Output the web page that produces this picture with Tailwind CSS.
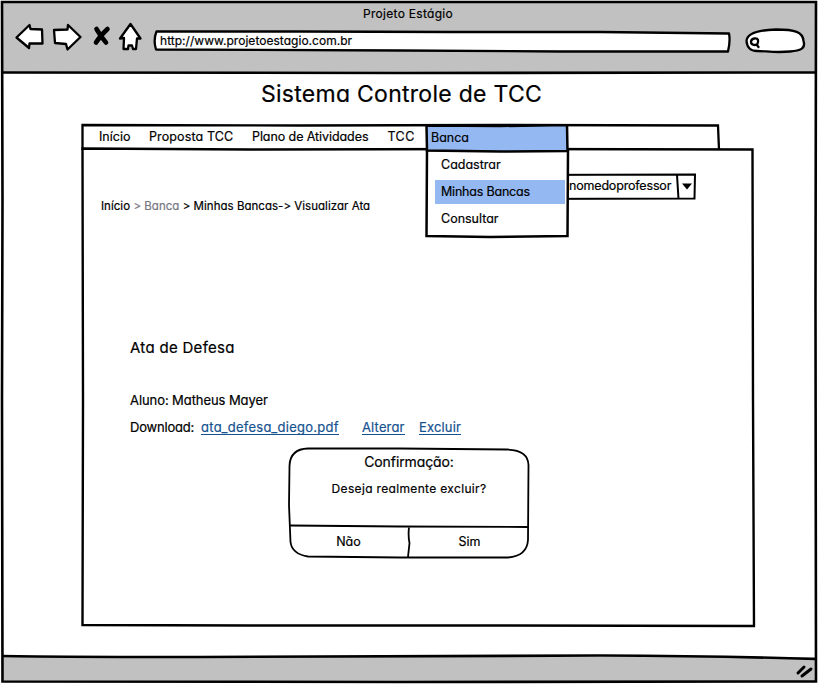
<!DOCTYPE html>
<html lang="pt-BR">
<head>
<meta charset="utf-8">
<title>Projeto Estágio</title>
<script src="https://cdn.jsdelivr.net/npm/@tailwindcss/browser@4"></script>
</head>
<body class="bg-white overflow-hidden">
<div class="relative flex flex-col w-[818px] h-[684px] text-black whitespace-nowrap font-[Inter,'Open_Sans',sans-serif] [font-feature-settings:'cv11','calt'_0] [-webkit-text-stroke:0.2px] text-[12.5px] leading-[18px]">

  <header class="flex flex-col h-[71px] shrink-0 ml-[3px] mr-[3px] mt-[2px] bg-[#c1c1c1]">
    <h1 class="h-[18px] pt-[3px] text-center text-[12px] tracking-[0.3px] pr-[2px]">Projeto Estágio</h1>
    <div class="flex items-start">
      <svg class="w-[150px] h-[36px] shrink-0" viewBox="3 20 150 36" fill="#fff" stroke="#000" stroke-width="2.300" stroke-linejoin="round" stroke-linecap="round">
        <path d="M16.500 37.500 L29.500 25 L30.500 29 L42 29.500 L42.500 43.500 L29.500 43.500 L29 48 Z"/>
        <path d="M54 30 L67.500 29.500 L68 25 L80.500 37 L67.500 49.500 L66 44 L55 43 Z"/>
        <path d="M96.500 29 Q101 37 106 42.500 M107.500 29 Q100 36 96 42.500" stroke-width="4.600" fill="none"/>
        <path d="M130.500 24 L140.500 38.500 L137 38.500 L136 49 L133 49 L132 45.500 L128.500 45.500 L128 49 L123.500 49 L124 38 L120 38.500 Z"/>
      </svg>
      <div class="relative w-[578px] h-[22px] mt-[9px] shrink-0">
        <svg class="absolute inset-0 w-full h-full overflow-visible" viewBox="153 29 578 22" fill="#fff" stroke="#000" stroke-width="2.300" stroke-linejoin="round">
          <path d="M156.500 31.500 L300 31.500 L450 32 L600 32 L729 33.500 Q730.500 41 728 51.500 L560 51.500 L400 50.500 L156 49.500 Q153 40 156.500 31.500 Z"/>
        </svg>
        <span class="relative block pl-[7px] pt-[3px] text-[12px] tracking-[0.03px]">http://www.projetoestagio.com.br</span>
      </div>
      <svg class="w-[64px] h-[28px] mt-[8px] ml-[12px] overflow-visible" viewBox="743 28 64 28" fill="#fff" stroke="#000" stroke-width="2.300" stroke-linecap="round">
        <path d="M746.500 41 C747 33 758 30 776 29.500 C795 29.500 803 32 803.500 41 C806 49 800 50.500 790 51.500 C775 53 766 51 757 51 C750 51 747 47 746.500 41 Z"/>
        <path d="M751 41.500 C751.500 38 757 37.500 758 40 C758.500 43.500 757 45 755 45 C752.500 45 751 43.500 751 41.500 Z M756.500 44.500 L758.500 47"/>
      </svg>
    </div>
  </header>

  <main class="h-[584px] shrink-0 pt-[2px] pl-[81px]">
    <h2 class="h-[49px] pt-[5px] pl-[180px] text-[23px] leading-[28px] tracking-[0.27px]">Sistema Controle de TCC</h2>

    <nav class="relative w-[640px] h-[25px]">
      <svg class="absolute left-0 top-0 w-[640px] h-[28px] overflow-visible" viewBox="81 124 640 28" fill="none" stroke="#000" stroke-width="2.300"><path d="M82.500 150 L82.500 125 L300 125.500 L500 125 L718 125.500 L719 150"/></svg>
      <div class="relative flex pl-[18px] pt-[4px]">
        <span class="w-[50px]">Início</span>
        <span class="w-[103px] tracking-[0.12px]">Proposta TCC</span>
        <span class="w-[135.500px] tracking-[-0.08px]">Plano de Atividades</span>
        <span class="tracking-[0.4px]">TCC</span>
      </div>
      <div class="absolute z-10 left-[343px] top-0 w-[146px] h-[115px]">
        <svg class="absolute inset-0 w-full h-full" viewBox="424 124 146 115" fill="#fff" stroke="#000" stroke-width="2.500">
          <path d="M427 150 L426.500 236 L490 237 L567.500 236 L568 150 Z"/>
          <path d="M426.500 125.500 L500 126 L567 125 L567.500 151 L500 151.500 L427 150.500 Z" fill="#94b9f2"/>
        </svg>
        <div class="relative pl-[7px] pt-[5px] h-[29px]">Banca</div>
        <ul class="relative ml-[11px] w-[130px]">
          <li class="h-[27px] pt-[3px] pl-[6px]">Cadastrar</li>
          <li class="h-[24px] pt-[3px] pl-[6px] bg-[#94b9f2] tracking-[-0.2px]">Minhas Bancas</li>
          <li class="h-[27px] pt-[6px] pl-[6px]">Consultar</li>
        </ul>
      </div>
    </nav>

    <section class="relative w-[674px] h-[479px]">
      <svg class="absolute inset-0 w-full h-full overflow-visible" viewBox="81 149 674 479" fill="none" stroke="#000" stroke-width="2.400"><path d="M82.500 148.500 L250 149.500 L500 149 L752.500 149.500 L753 400 L754 626 L500 625.500 L250 625.500 L82.500 625 L83 400 Z"/></svg>
      <div class="relative flex h-[183px]">
        <p class="pt-[48px] pl-[20px] w-[404px] text-[11.500px] tracking-[0.03px]">Início <span class="text-[#777783]">&gt; Banca</span> &gt; Minhas Bancas-&gt; Visualizar Ata</p>
        <div class="relative w-[213px] h-[28px] mt-[24px]">
          <svg class="absolute inset-0 w-full h-full" viewBox="485 173 213 28" fill="none" stroke="#000" stroke-width="2"><path d="M485 175 L695 174.500 L694.500 198.500 L485 199 M677 175 L678.500 199"/><path d="M682 183.500 L692 183.500 L687 189.500 Z" fill="#000" stroke="none"/></svg>
          <span class="relative block pl-[84px] pt-[4px] tracking-[-0.18px]">nomedoprofessor</span>
        </div>
      </div>
      <div class="relative pl-[49px]">
        <h3 class="h-[58px] pt-[7px] text-[15px] tracking-[0.3px]">Ata de Defesa</h3>
        <p class="h-[27px] pt-[1px] text-[13px] tracking-[-0.08px]">Aluno: Matheus Mayer</p>
        <div class="flex h-[31px] pt-[1px] text-[13px]">
          <span class="w-[71px] tracking-[-0.2px]">Download:</span>
          <div class="w-[161px] text-[#15528f]"><a class="inline-block h-[17px] border-b border-[#15528f] tracking-[0.28px]">ata_defesa_diego.pdf</a></div>
          <div class="w-[57px] text-[#15528f]"><a class="inline-block h-[17px] border-b border-[#15528f] tracking-[0.15px]">Alterar</a></div>
          <div class="text-[#15528f]"><a class="inline-block h-[17px] border-b border-[#15528f] tracking-[0.15px]">Excluir</a></div>
        </div>
        <div class="relative ml-[158px] w-[242px] h-[112px] text-center">
          <svg class="absolute inset-0 w-full h-full overflow-visible" viewBox="288 448 242 112" fill="#fff" stroke="#000" stroke-width="1.800"><path d="M308 448.500 L400 448.500 L507 449.500 Q528 450 528.500 465 L528 540 Q527 556 508 557.500 L400 557.500 L308 556.500 Q292 554 290.500 542 L289 505 L289.500 466 Q290 449 308 448.500 Z"/><path d="M290 525.500 L400 526.500 L528 527 M409 527 Q408 536 409.500 543 L408 557"/></svg>
          <div class="relative h-[27px] pt-[5px] text-[14px] tracking-[-0.1px]">Confirmação:</div>
          <div class="relative h-[53px] pt-[5px] text-[12px] tracking-[0.34px]">Deseja realmente excluir?</div>
          <div class="relative flex pt-[5px]"><span class="w-[121px]">Não</span><span class="w-[121px]">Sim</span></div>
        </div>
      </div>
    </section>
  </main>

  <footer class="flex justify-end h-[25px] mx-[3px] bg-[#c1c1c1]">
    <svg class="w-[20px] h-[20px] mt-[4px]" viewBox="795 661 20 20" stroke="#000" stroke-width="3" stroke-linecap="round"><path d="M798 673 L804 667 M802 676 L811 669"/></svg>
  </footer>

  <svg class="absolute inset-0 w-full h-full pointer-events-none" viewBox="0 0 818 684" fill="none" stroke="#000" stroke-width="2.600">
    <path d="M2 2 L400 2 L816 2 L815.500 300 L816 681.500 L400 682 L2.500 681.500 L2 400 L2.500 200 Z"/>
    <path d="M2 72.500 L400 73 L816 72.500"/>
    <path d="M2 656 Q60 657 200 657 L600 655.500 Q720 656 816 659"/>
  </svg>
</div>
</body>
</html>
